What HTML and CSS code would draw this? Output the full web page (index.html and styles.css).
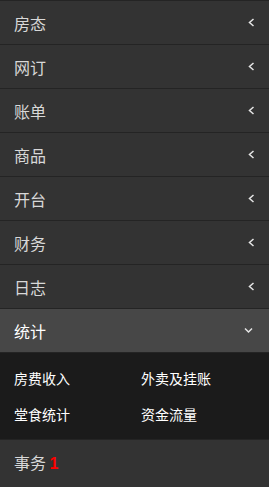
FILE: index.html
```html
<!DOCTYPE html>
<html lang="zh-CN">
<head>
    <meta charset="UTF-8">
    <meta name="viewport" content="width=device-width, initial-scale=1.0">
    <title>菜单</title>
    <link rel="stylesheet" href="styles.css">
</head>
<body>
<ul class="menu">
    <li class="item"><span>房态</span><svg class="arrow" viewBox="0 0 7 9"><polyline points="5.5,1 1.5,4.5 5.5,8"/></svg></li>
    <li class="item"><span>网订</span><svg class="arrow" viewBox="0 0 7 9"><polyline points="5.5,1 1.5,4.5 5.5,8"/></svg></li>
    <li class="item"><span>账单</span><svg class="arrow" viewBox="0 0 7 9"><polyline points="5.5,1 1.5,4.5 5.5,8"/></svg></li>
    <li class="item"><span>商品</span><svg class="arrow" viewBox="0 0 7 9"><polyline points="5.5,1 1.5,4.5 5.5,8"/></svg></li>
    <li class="item"><span>开台</span><svg class="arrow" viewBox="0 0 7 9"><polyline points="5.5,1 1.5,4.5 5.5,8"/></svg></li>
    <li class="item"><span>财务</span><svg class="arrow" viewBox="0 0 7 9"><polyline points="5.5,1 1.5,4.5 5.5,8"/></svg></li>
    <li class="item"><span>日志</span><svg class="arrow" viewBox="0 0 7 9"><polyline points="5.5,1 1.5,4.5 5.5,8"/></svg></li>
    <li class="item active"><span>统计</span><svg class="arrow down" viewBox="0 0 9 7"><polyline points="1,1.5 4.5,5 8,1.5"/></svg></li>
    <li class="sub">
        <a>房费收入</a>
        <a>外卖及挂账</a>
        <a>堂食统计</a>
        <a>资金流量</a>
    </li>
    <li class="item"><span>事务 <b class="count">1</b></span></li>
</ul>
</body>
</html>
```

FILE: styles.css
```css
body {
    margin: 0;
    background-color: #333333;
    font-family: "Noto Sans CJK SC", "Liberation Sans", sans-serif;
}
.menu {
    list-style: none;
    margin: 0;
    padding: 0;
    width: 269px;
}
.item {
    display: flex;
    align-items: center;
    justify-content: space-between;
    height: 43px;
    padding: 0 14px;
    border-top: 1px solid #242424;
    background-color: #333333;
    color: #d8d8d8;
    font-size: 16px;
}
.item.active {
    background-color: #474747;
    color: #ffffff;
}
.arrow {
    width: 7px;
    height: 9px;
    fill: none;
    stroke: #e6e6e6;
    stroke-width: 1.5;
}
.arrow.down {
    width: 9px;
    height: 7px;
    margin-right: 2px;
}
.sub {
    display: grid;
    grid-template-columns: 127px 1fr;
    grid-auto-rows: 36px;
    align-items: center;
    padding: 7px 14px 7px 14px;
    border-top: 1px solid #242424;
    background-color: #1b1b1b;
}
.sub a {
    color: #ffffff;
    font-size: 14px;
}
.count {
    color: #ff0000;
    font-family: "Liberation Sans", sans-serif;
    font-size: 16px;
}
```
